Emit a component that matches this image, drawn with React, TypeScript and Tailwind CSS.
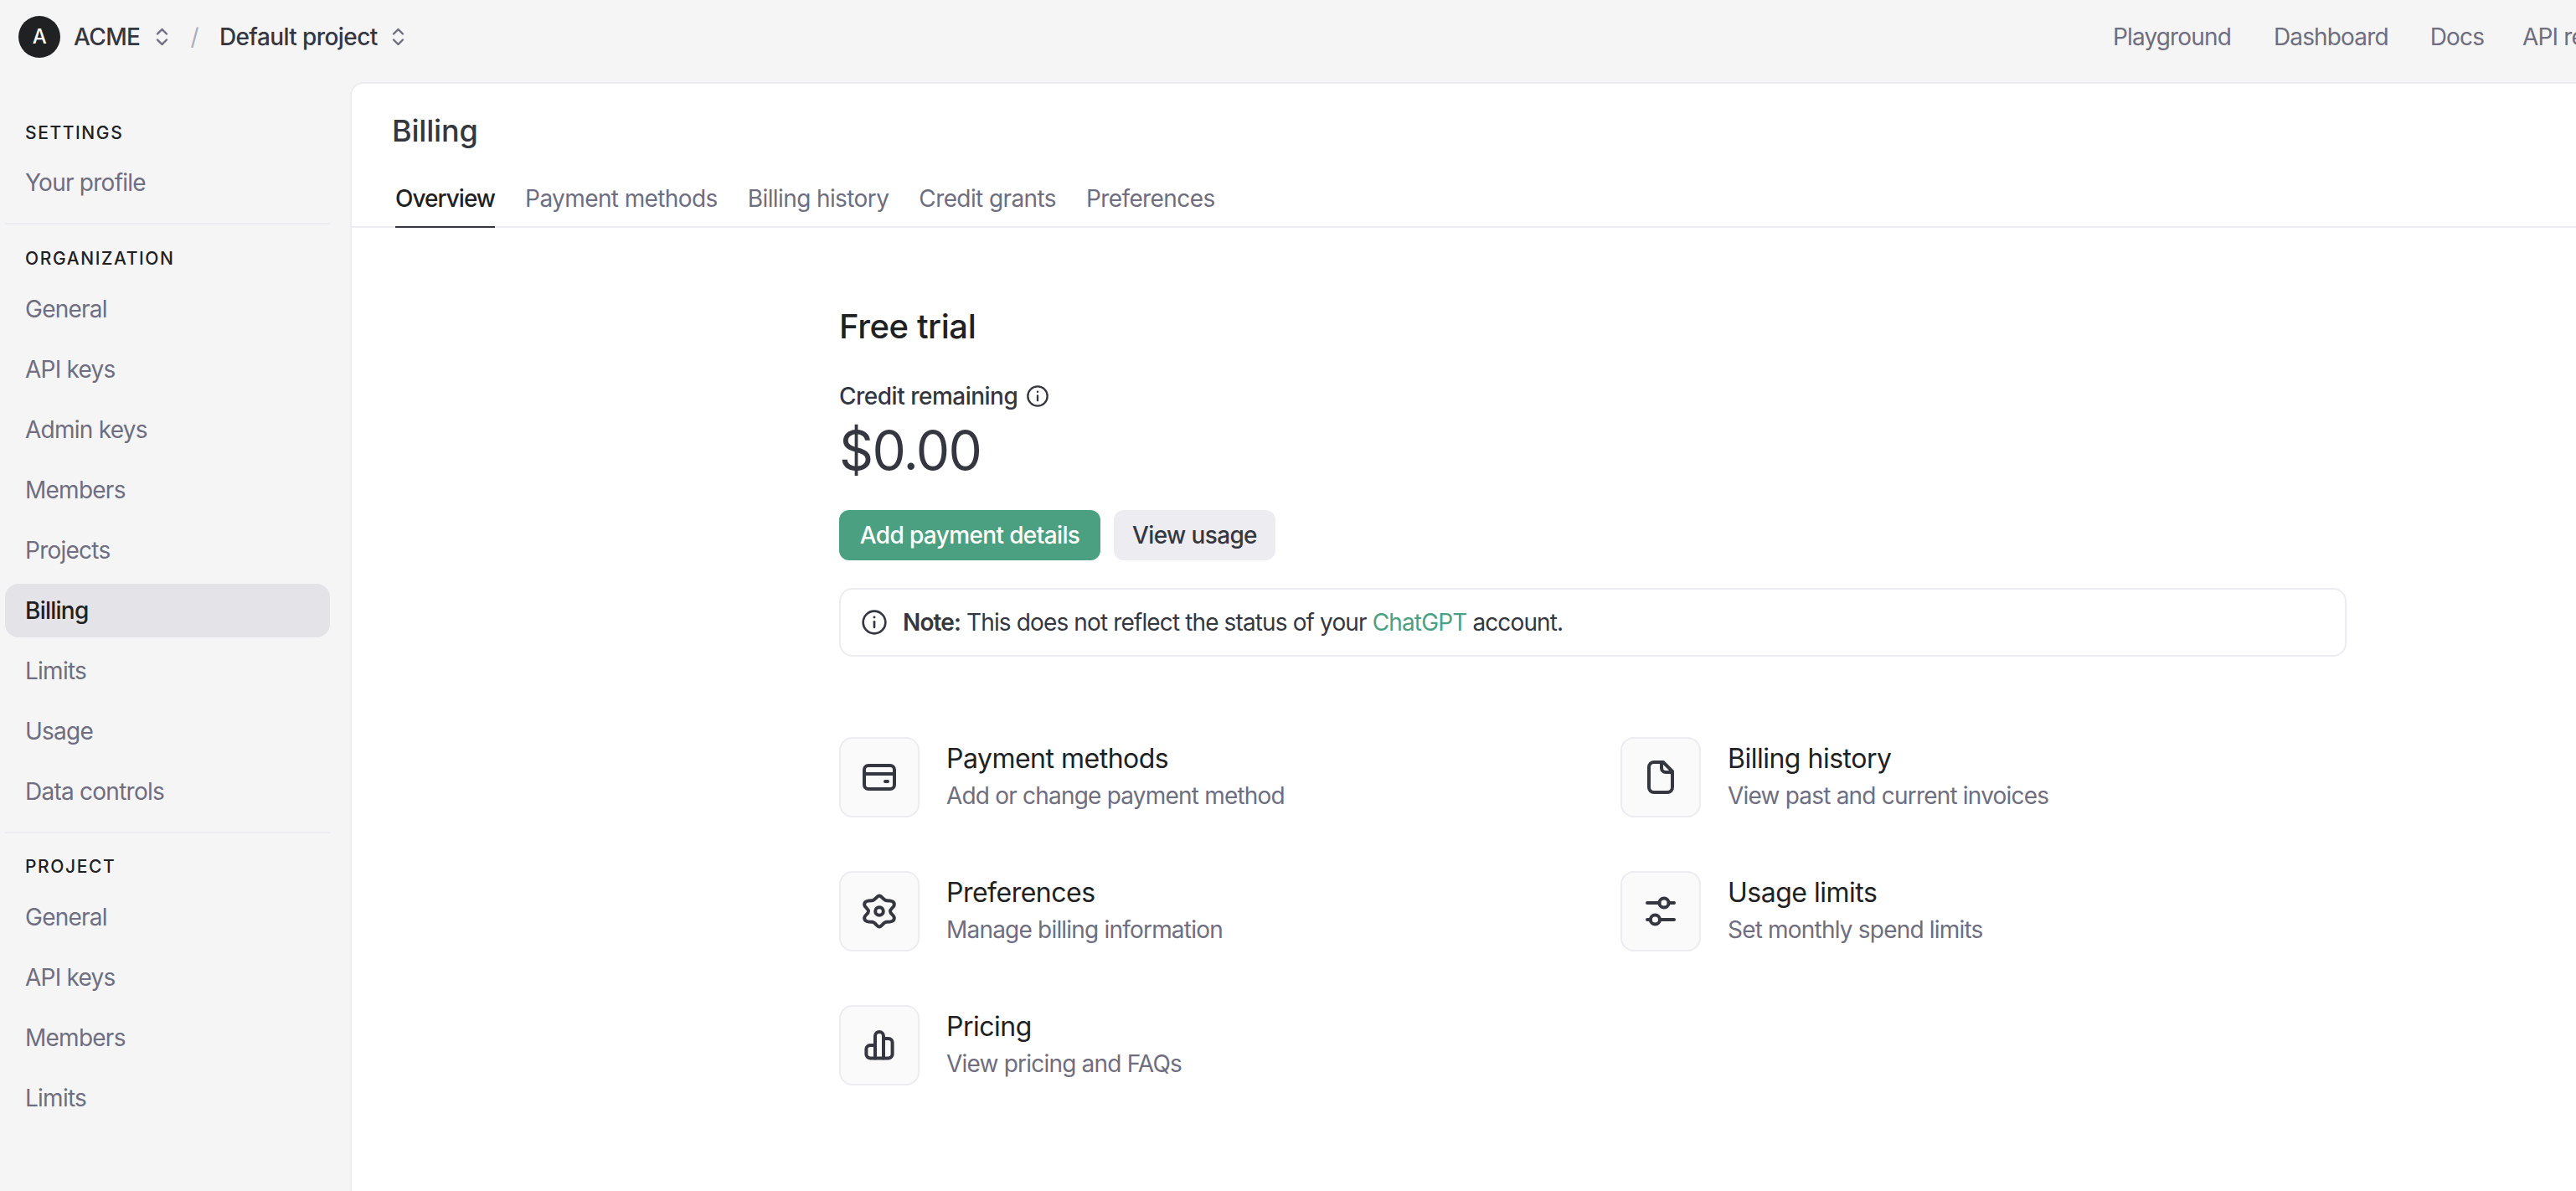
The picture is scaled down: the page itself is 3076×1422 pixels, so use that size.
import React from "react";

const font = "font-['Inter','Liberation_Sans',sans-serif]";

function UpDown() {
    return (
        <svg viewBox="0 0 17 22" fill="none" stroke="currentColor" strokeWidth="2.4" strokeLinecap="round" strokeLinejoin="round" className="w-[17px] h-[22px] text-[#6e6e80]">
            <path d="M3 7.5l5.5-5.5 5.5 5.5" />
            <path d="M3 14.5l5.5 5.5 5.5-5.5" />
        </svg>
    );
}

function InfoIcon({ className }: { className: string }) {
    return (
        <svg viewBox="0 0 24 24" fill="none" stroke="currentColor" strokeWidth="2" strokeLinecap="round" className={className}>
            <circle cx="12" cy="12" r="10" />
            <path d="M12 11.5v5" />
            <circle cx="12" cy="7.5" r="0.6" fill="currentColor" strokeWidth="1" />
        </svg>
    );
}

function CardIcon() {
    return (
        <svg viewBox="0 0 24 24" fill="none" stroke="currentColor" strokeWidth="2" strokeLinecap="round" strokeLinejoin="round" className="w-12 h-12">
            <rect x="3" y="5" width="18" height="14" rx="2.5" />
            <path d="M3 10h18" />
            <path d="M15.5 14.5h1.5" />
        </svg>
    );
}

function FileIcon() {
    return (
        <svg viewBox="0 0 24 24" fill="none" stroke="currentColor" strokeWidth="2" strokeLinecap="round" strokeLinejoin="round" className="w-12 h-12">
            <path d="M8 3h5.5L19 8.5V18a3 3 0 0 1-3 3H8a3 3 0 0 1-3-3V6a3 3 0 0 1 3-3z" />
            <path d="M12.5 3v3.5A2.5 2.5 0 0 0 15 9h4" />
        </svg>
    );
}

function GearIcon() {
    return (
        <svg viewBox="0 0 24 24" fill="none" stroke="currentColor" strokeWidth="2" strokeLinecap="round" strokeLinejoin="round" className="w-12 h-12">
            <path d="M12 2.8C13.6 2.8 14.4 5.6 16.4 5.6C18.4 5.6 21.2 5.8 20.9 8.2C20.7 9.8 18.5 10.4 18.5 12C18.5 13.6 20.7 14.2 20.9 15.8C21.2 18.2 18.4 18.4 16.4 18.4C14.4 18.4 13.6 21.2 12 21.2C10.4 21.2 9.6 18.4 7.6 18.4C5.6 18.4 2.8 18.2 3.1 15.8C3.3 14.2 5.5 13.6 5.5 12C5.5 10.4 3.3 9.8 3.1 8.2C2.8 5.8 5.6 5.6 7.6 5.6C9.6 5.6 10.4 2.8 12 2.8Z" />
            <circle cx="12" cy="12" r="2.4" />
        </svg>
    );
}

function SlidersIcon() {
    return (
        <svg viewBox="0 0 24 24" fill="none" stroke="currentColor" strokeWidth="2" strokeLinecap="round" strokeLinejoin="round" className="w-12 h-12">
            <path d="M4 7h7.2M16.8 7H20M4 17h1.9M11.5 17H20" />
            <circle cx="14" cy="7" r="2.8" />
            <circle cx="8.7" cy="17" r="2.8" />
        </svg>
    );
}

function BarsIcon() {
    return (
        <svg viewBox="0 0 24 24" fill="none" stroke="currentColor" strokeWidth="2" strokeLinecap="round" strokeLinejoin="round" className="w-12 h-12">
            <path d="M9.5 12h-3a2.3 2.3 0 0 0-2.3 2.3v3.2a2.3 2.3 0 0 0 2.3 2.2h11a2.3 2.3 0 0 0 2.3-2.2v-7.2a2.3 2.3 0 0 0-2.3-2.3h-3" />
            <path d="M9.5 19.7V6.5a2.5 2.5 0 0 1 5 0v13.2" />
        </svg>
    );
}

function SideLink({ label, active }: { label: string; active?: boolean }) {
    return (
        <div className={active ? "h-16 flex items-center pl-6 rounded-2xl bg-[#e3e3e8] text-[#202123] font-medium" : "h-16 flex items-center pl-6 rounded-2xl text-[#6e6e80]"}>
            {label}
        </div>
    );
}

function SideTitle({ label }: { label: string }) {
    return <div className="pl-6 h-8 flex items-center text-[21px] font-medium tracking-[1.6px] text-[#202123]">{label}</div>;
}

function LinkCard({ title, desc, icon }: { title: string; desc: string; icon: React.ReactNode }) {
    return (
        <div className="flex items-center gap-[32px]">
            <div className="w-24 h-24 flex items-center justify-center rounded-2xl border-2 border-[#ececf1] bg-[#fafafa] text-[#353740]">{icon}</div>
            <div className="flex flex-col gap-[8px]">
                <div className="text-[32px] leading-9 tracking-[-0.5px] text-[#202123]">{title}</div>
                <div className="text-[28px] leading-9 tracking-[-0.8px] text-[#6e6e80]">{desc}</div>
            </div>
        </div>
    );
}

export default function App() {
    return (
        <div className={`${font} flex flex-col w-full h-screen overflow-hidden bg-[#f5f5f5] text-[28px] tracking-[-0.75px]`}>
            {/* Top bar */}
            <header className="flex items-start h-[98px] shrink-0 pl-[22px] pt-[19px]">
                <div className="flex items-center h-[50px] w-[2501px] shrink-0 text-[#353740] font-medium tracking-[-0.6px]">
                    <div className="w-[50px] h-[50px] rounded-full bg-[#202123] text-white flex items-center justify-center text-[24px]">A</div>
                    <span className="ml-4">ACME</span>
                    <span className="ml-[18px]"><UpDown /></span>
                    <span className="ml-[25px] text-[#acacbe] font-normal">/</span>
                    <span className="ml-[25px]">Default project</span>
                    <span className="ml-4"><UpDown /></span>
                </div>
                <nav className="flex items-center h-[50px] gap-[50px] shrink-0 text-[#6e6e80] tracking-[-0.85px]">
                    <span>Playground</span>
                    <span className="ml-px">Dashboard</span>
                    <span>Docs</span>
                    <span className="-ml-1">API reference</span>
                </nav>
            </header>

            <div className="flex flex-1 min-h-0">
                {/* Sidebar */}
                <aside className="w-[418px] shrink-0 pl-[6px] pr-[24px] pt-[45px]">
                    <SideTitle label="SETTINGS" />
                    <div className="mt-[11px]"><SideLink label="Your profile" /></div>
                    <div className="h-[2px] bg-[#ececf1] mt-4 mb-[25px]" />
                    <SideTitle label="ORGANIZATION" />
                    <div className="mt-3 flex flex-col gap-2">
                        <SideLink label="General" />
                        <SideLink label="API keys" />
                        <SideLink label="Admin keys" />
                        <SideLink label="Members" />
                        <SideLink label="Projects" />
                        <SideLink label="Billing" active />
                        <SideLink label="Limits" />
                        <SideLink label="Usage" />
                        <SideLink label="Data controls" />
                    </div>
                    <div className="h-[2px] bg-[#ececf1] mt-4 mb-6" />
                    <SideTitle label="PROJECT" />
                    <div className="mt-3 flex flex-col gap-2">
                        <SideLink label="General" />
                        <SideLink label="API keys" />
                        <SideLink label="Members" />
                        <SideLink label="Limits" />
                    </div>
                </aside>

                {/* Main panel */}
                <main className="flex-1 min-w-0 bg-white border-l-2 border-t-2 border-[#ececf1] rounded-tl-2xl">
                    <div className="border-b-2 border-[#ececf1] h-[172px] flex flex-col">
                        <h1 className="pl-12 pt-[34px] text-[36px] leading-11 font-medium tracking-[-0.2px] text-[#353740]">Billing</h1>
                        <div className="flex gap-9 pl-[52px] mt-auto -mb-[2px] tracking-[-0.6px]">
                            <div className="pb-3 border-b-2 border-[#353740] text-[#202123] font-medium tracking-[-1px]">Overview</div>
                            <div className="pb-3 text-[#6e6e80]">Payment methods</div>
                            <div className="pb-3 text-[#6e6e80]">Billing history</div>
                            <div className="pb-3 text-[#6e6e80]">Credit grants</div>
                            <div className="pb-3 text-[#6e6e80]">Preferences</div>
                        </div>
                    </div>

                    <div className="w-[1800px] ml-[582px] pt-[94px]">
                        <h2 className="text-[40px] leading-12 font-medium tracking-[-0.4px] text-[#202123]">Free trial</h2>
                        <div className="flex items-center gap-[10px] mt-[41px] leading-9 font-medium tracking-[-0.5px] text-[#353740]">
                            Credit remaining
                            <InfoIcon className="w-7 h-7" />
                        </div>
                        <div className="mt-[9px] text-[64px] leading-[76px] tracking-[-1.6px] text-[#353740]">$0.00</div>
                        <div className="flex gap-4 mt-[33px] font-medium tracking-[-0.63px]">
                            <button className="h-[60px] w-[312px] rounded-xl bg-[#4ba082] text-white">Add payment details</button>
                            <button className="h-[60px] w-[193px] rounded-xl bg-[#ececf1] text-[#353740]">View usage</button>
                        </div>
                        <div className="flex items-center h-[82px] mt-[33px] pl-6 rounded-2xl border-2 border-[#ececf1] tracking-[-0.87px] text-[#353740]">
                            <InfoIcon className="w-8 h-8 mr-[18px]" />
                            <span><span className="font-semibold">Note:</span> This does not reflect the status of your <span className="text-[#4ba082]">ChatGPT</span> account.</span>
                        </div>
                        <div className="grid grid-cols-2 gap-x-[66px] gap-y-16 mt-24">
                            <LinkCard title="Payment methods" desc="Add or change payment method" icon={<CardIcon />} />
                            <LinkCard title="Billing history" desc="View past and current invoices" icon={<FileIcon />} />
                            <LinkCard title="Preferences" desc="Manage billing information" icon={<GearIcon />} />
                            <LinkCard title="Usage limits" desc="Set monthly spend limits" icon={<SlidersIcon />} />
                            <LinkCard title="Pricing" desc="View pricing and FAQs" icon={<BarsIcon />} />
                        </div>
                    </div>
                </main>
            </div>
        </div>
    );
}
